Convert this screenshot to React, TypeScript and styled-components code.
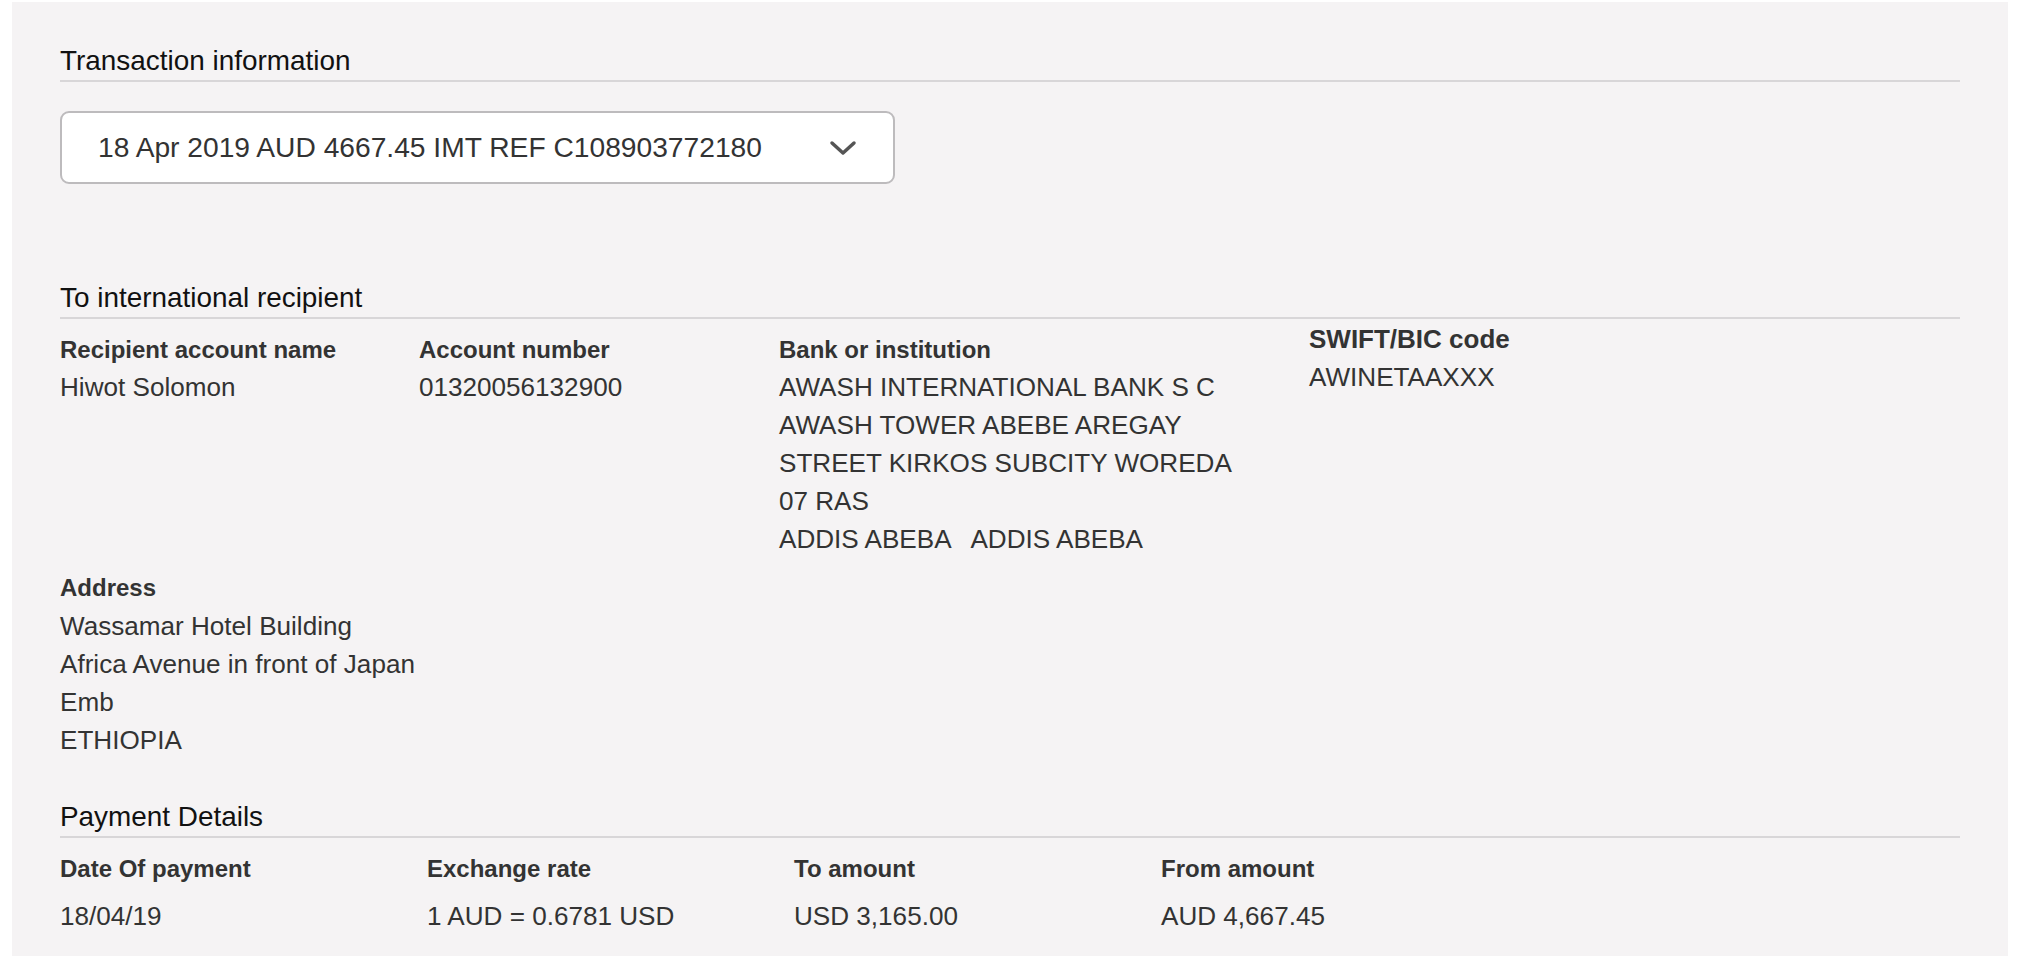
import React from "react";
import styled, { createGlobalStyle } from "styled-components";

const GlobalStyle = createGlobalStyle`
  html, body {
    margin: 0;
    padding: 0;
    background: #ffffff;
  }
  body {
    font-family: "Liberation Sans", Arial, Helvetica, sans-serif;
  }
`;

const Panel = styled.main`
  margin: 2px 14px 16px 12px;
  padding: 43px 48px 21px 48px;
  background: #f5f3f4;
`;

const Section = styled.section<{ $gap?: number }>`
  margin-top: ${(p) => p.$gap ?? 0}px;
`;

const SectionTitle = styled.h2`
  margin: 0;
  padding-bottom: 3px;
  font-size: 27.9px;
  font-weight: 400;
  line-height: 32px;
  color: #111111;
  border-bottom: 2px solid #d8d6d8;
`;

const Select = styled.div`
  margin-top: 29px;
  width: 835px;
  height: 73px;
  box-sizing: border-box;
  display: flex;
  align-items: center;
  justify-content: space-between;
  padding: 0 36px 0 36px;
  background: #ffffff;
  border: 2px solid #bdbbbd;
  border-radius: 9px;
  font-size: 28.2px;
  color: #333333;
  cursor: pointer;
`;

const Chevron = styled.svg`
  width: 28px;
  height: 16px;
  flex: none;
`;

const FieldGrid = styled.div<{ $cols: string; $top: number }>`
  display: grid;
  grid-template-columns: ${(p) => p.$cols};
  align-items: start;
  row-gap: 15px;
  margin-top: ${(p) => p.$top}px;
`;

const Field = styled.div<{ $shift?: number }>`
  display: flex;
  flex-direction: column;
  margin-top: ${(p) => p.$shift ?? 0}px;
`;

const Label = styled.div<{ $size?: number }>`
  font-size: ${(p) => p.$size ?? 24}px;
  font-weight: 700;
  line-height: 30px;
  color: #333333;
  white-space: nowrap;
`;

const Lines = styled.div<{ $gap: number }>`
  display: flex;
  flex-direction: column;
  margin-top: ${(p) => p.$gap}px;
`;

const Line = styled.div`
  font-size: 26.1px;
  line-height: 38px;
  color: #333333;
  white-space: pre;
`;

type FieldProps = {
  label: string;
  lines: string[];
  labelSize?: number;
  shift?: number;
  gap?: number;
};

function InfoField({ label, lines, labelSize, shift, gap = 3.5 }: FieldProps) {
  return (
    <Field $shift={shift}>
      <Label $size={labelSize}>{label}</Label>
      <Lines $gap={gap}>
        {lines.map((l, i) => (
          <Line key={i}>{l}</Line>
        ))}
      </Lines>
    </Field>
  );
}

export default function App() {
  return (
    <>
      <GlobalStyle />
      <Panel>
        <Section>
          <SectionTitle>Transaction information</SectionTitle>
          <Select>
            <span>18 Apr 2019 AUD 4667.45 IMT REF C108903772180</span>
            <Chevron viewBox="0 0 28 16" aria-hidden="true">
              <path
                d="M3 3 L14 13 L25 3"
                fill="none"
                stroke="#555555"
                strokeWidth="3.5"
                strokeLinecap="round"
                strokeLinejoin="round"
              />
            </Chevron>
          </Select>
        </Section>

        <Section $gap={98}>
          <SectionTitle>To international recipient</SectionTitle>
          <FieldGrid $cols="359px 360px 530px 1fr" $top={15.5}>
            <InfoField label="Recipient account name" lines={["Hiwot Solomon"]} />
            <InfoField label="Account number" lines={["01320056132900"]} />
            <InfoField
              label="Bank or institution"
              lines={[
                "AWASH INTERNATIONAL BANK S C",
                "AWASH TOWER ABEBE AREGAY",
                "STREET KIRKOS SUBCITY WOREDA",
                "07 RAS",
                "ADDIS ABEBA   ADDIS ABEBA",
              ]}
            />
            <InfoField label="SWIFT/BIC code" labelSize={26} shift={-10.5} lines={["AWINETAAXXX"]} />
            <InfoField
              label="Address"
              lines={["Wassamar Hotel Building", "Africa Avenue in front of Japan", "Emb", "ETHIOPIA"]}
            />
          </FieldGrid>
        </Section>

        <Section $gap={42}>
          <SectionTitle>Payment Details</SectionTitle>
          <FieldGrid $cols="367px 367px 367px 1fr" $top={16}>
            <InfoField label="Date Of payment" gap={13} lines={["18/04/19"]} />
            <InfoField label="Exchange rate" gap={13} lines={["1 AUD = 0.6781 USD"]} />
            <InfoField label="To amount" gap={13} lines={["USD 3,165.00"]} />
            <InfoField label="From amount" gap={13} lines={["AUD 4,667.45"]} />
          </FieldGrid>
        </Section>
      </Panel>
    </>
  );
}
